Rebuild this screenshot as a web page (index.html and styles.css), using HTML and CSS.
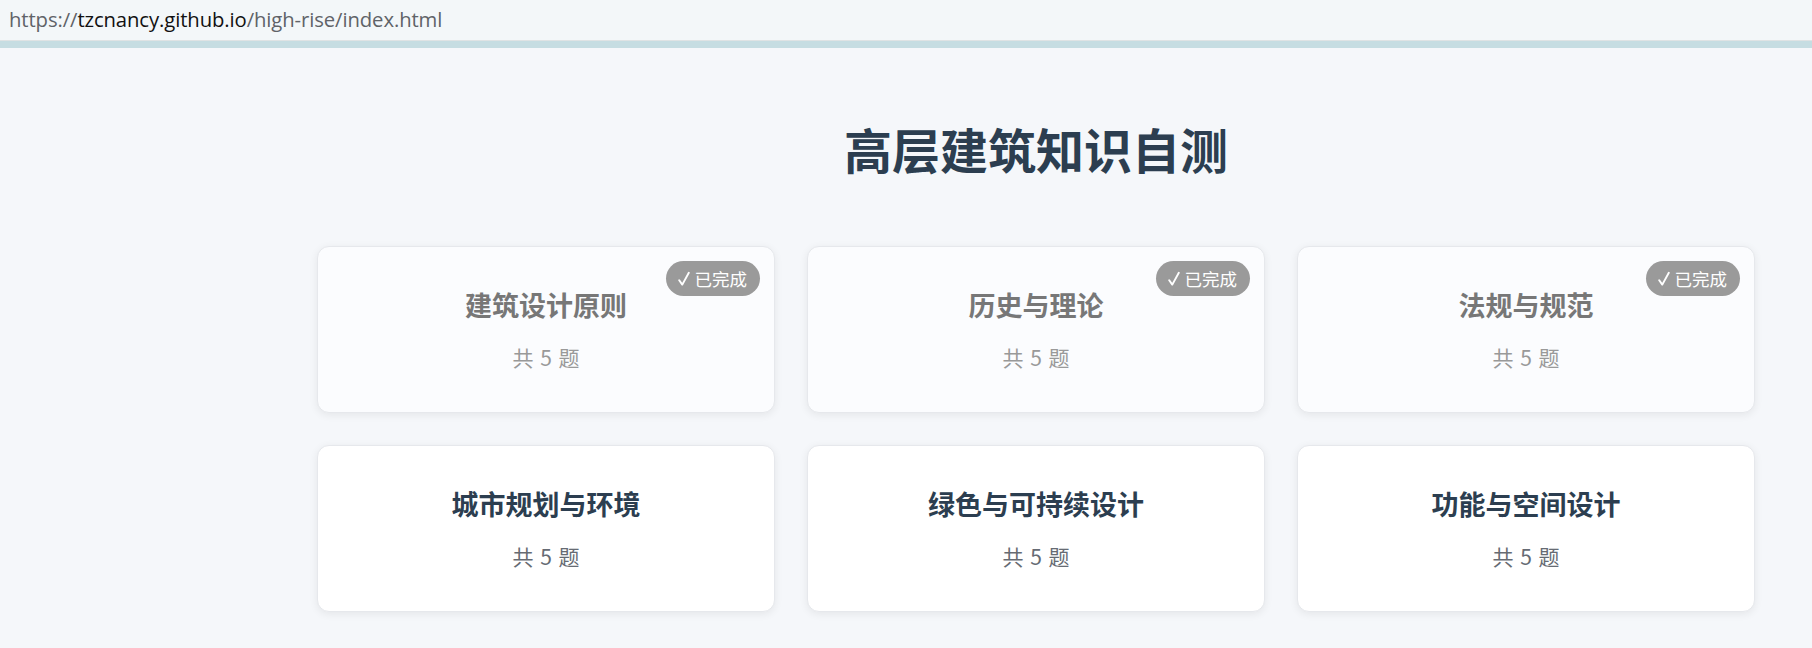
FILE: index.html
```html
<!DOCTYPE html>
<html lang="zh-CN">
<head>
<meta charset="utf-8">
<title>高层建筑知识自测</title>
<link rel="stylesheet" href="styles.css">
</head>
<body>
<div class="urlbar">
  <span class="url"><span class="dim">https://</span><span class="host">tzcnancy.github.io</span><span class="dim">/high-rise/index.html</span></span>
</div>
<div class="accent"></div>
<div class="page">
  <div class="spacer"></div>
  <main class="main">
    <h1 class="title">高层建筑知识自测</h1>
    <div class="grid">
      <div class="card done">
        <span class="badge"><svg class="check" viewBox="0 0 12 16" aria-hidden="true"><path d="M1.2 9.2 L4.3 13.6 L10.8 1.8"/></svg>已完成</span>
        <h2 class="card-title">建筑设计原则</h2>
        <p class="card-count">共 5 题</p>
      </div>
      <div class="card done">
        <span class="badge"><svg class="check" viewBox="0 0 12 16" aria-hidden="true"><path d="M1.2 9.2 L4.3 13.6 L10.8 1.8"/></svg>已完成</span>
        <h2 class="card-title">历史与理论</h2>
        <p class="card-count">共 5 题</p>
      </div>
      <div class="card done">
        <span class="badge"><svg class="check" viewBox="0 0 12 16" aria-hidden="true"><path d="M1.2 9.2 L4.3 13.6 L10.8 1.8"/></svg>已完成</span>
        <h2 class="card-title">法规与规范</h2>
        <p class="card-count">共 5 题</p>
      </div>
      <div class="card">
        <h2 class="card-title">城市规划与环境</h2>
        <p class="card-count">共 5 题</p>
      </div>
      <div class="card">
        <h2 class="card-title">绿色与可持续设计</h2>
        <p class="card-count">共 5 题</p>
      </div>
      <div class="card">
        <h2 class="card-title">功能与空间设计</h2>
        <p class="card-count">共 5 题</p>
      </div>
    </div>
  </main>
</div>
</body>
</html>
```
FILE: styles.css
```css
html, body {
  margin: 0;
  padding: 0;
}
body {
  background: #f5f7fa;
  font-family: "Noto Sans CJK SC", "Noto Sans", sans-serif;
  overflow: hidden;
}
.urlbar {
  height: 40px;
  background: #f3f7f9;
  border-bottom: 1px solid #dfe3e4;
  display: flex;
  align-items: center;
  padding-left: 9px;
}
.url {
  font-family: "Open Sans", "Liberation Sans", sans-serif;
  font-size: 20.3px;
  color: #5f6368;
  letter-spacing: -0.1px;
  margin-top: -2px;
}
.url .host {
  color: #111;
}
.accent {
  height: 7px;
  background: #c6dde2;
}
.page {
  display: flex;
}
.spacer {
  width: 260px;
  flex: none;
}
.main {
  flex: 1;
  padding: 71px 57px 40px;
}
.title {
  margin: 0 0 69px;
  text-align: center;
  font-size: 48px;
  line-height: 58px;
  font-weight: 700;
  color: #2c3e50;
}
.grid {
  display: grid;
  grid-template-columns: repeat(3, 1fr);
  gap: 32px;
}
.card {
  position: relative;
  background: #fff;
  border: 1px solid #e6e8ec;
  border-radius: 12px;
  box-shadow: 0 2px 8px rgba(0, 0, 0, 0.07);
  text-align: center;
  box-sizing: border-box;
  height: 167px;
  padding-top: 41px;
}
.card.done {
  background: #fbfcfe;
}
.card-title {
  margin: 0;
  font-size: 27px;
  line-height: 33px;
  font-weight: 700;
  color: #2c3e50;
}
.card.done .card-title {
  color: #777;
}
.card-count {
  margin: 21px 0 0;
  font-size: 21px;
  line-height: 31px;
  word-spacing: 2px;
  color: #666b73;
}
.card.done .card-count {
  color: #999;
}
.badge {
  position: absolute;
  top: 14px;
  right: 14px;
  display: flex;
  align-items: center;
  gap: 5px;
  background: #9a9a9a;
  color: #fff;
  font-size: 17.5px;
  line-height: 19px;
  padding: 8px 13px 8px 12px;
  border-radius: 18px;
}
.check {
  width: 12px;
  height: 16px;
  fill: none;
  stroke: #fff;
  stroke-width: 1.9;
  stroke-linecap: round;
  stroke-linejoin: round;
}
```
